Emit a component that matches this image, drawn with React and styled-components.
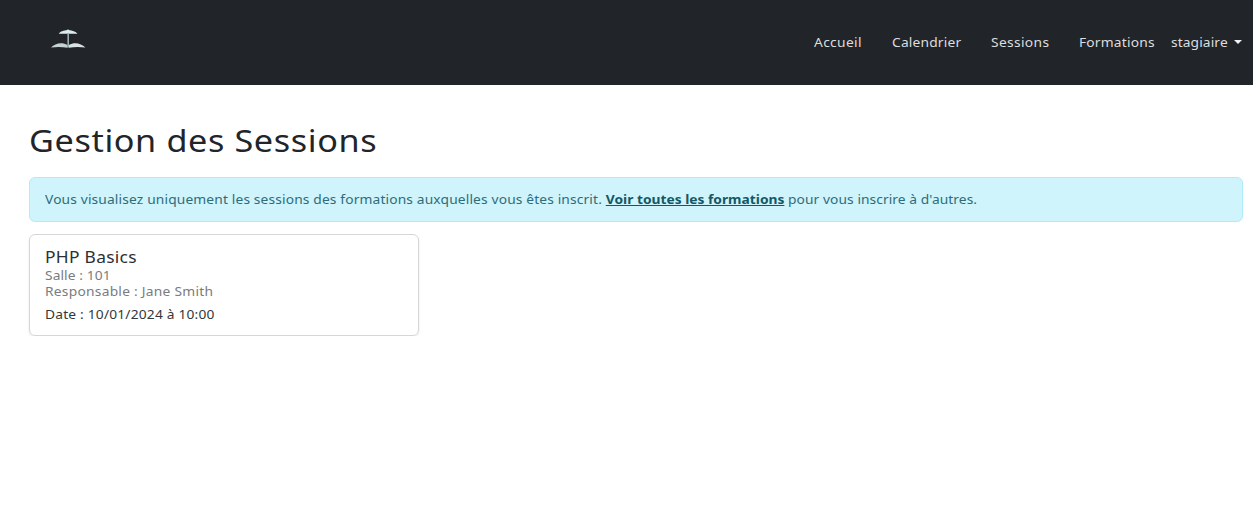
import React from "react";
import styled, { createGlobalStyle } from "styled-components";

const GlobalStyle = createGlobalStyle`
  *, *::before, *::after { box-sizing: border-box; }
  body {
    margin: 0;
    background: #fff;
    color: #212529;
    font-family: "Noto Sans", "Open Sans", sans-serif;
    font-size: 13px;
    line-height: 20px;
  }
  h1, h2, p { margin: 0; font-weight: 400; }
`;

const WideText = styled.span`
  display: inline-block;
  transform: scaleX(${(p) => p.$scale || 1.06});
  transform-origin: left center;
  letter-spacing: ${(p) => p.$spacing || 0}px;
  white-space: nowrap;
`;

const Spaced = styled.span`
  letter-spacing: ${(p) => p.$spacing}px;
`;

const Navbar = styled.header`
  display: flex;
  justify-content: space-between;
  height: 85px;
  padding: 28px 10px 0 50px;
  background: #212529;
`;

const Logo = styled.svg`
  display: block;
  width: 36px;
  height: 22px;
`;

const Nav = styled.nav`
  display: flex;
  padding-top: 4px;
`;

const NavLink = styled.a`
  width: ${(p) => p.$width}px;
  color: #dcddde;
  text-decoration: none;
  white-space: nowrap;
`;

const Caret = styled.span`
  display: inline-block;
  margin-left: 9.5px;
  vertical-align: 3px;
  border-top: 4px solid #f1f2f2;
  border-left: 4px solid transparent;
  border-right: 4px solid transparent;
`;

const Main = styled.main`
  padding: 36px 10px 0 29px;
`;

const Title = styled.h1`
  font-size: 30px;
  line-height: 40px;
`;

const Alert = styled.div`
  height: 45px;
  margin-top: 16px;
  padding: 11px 15px;
  border: 1px solid #b0ecf7;
  border-radius: 6px;
  background: #cff4fc;
  color: #2d6d79;
`;

const AlertLink = styled.a`
  color: #135864;
  font-weight: 700;
  text-decoration: underline;
`;

const Card = styled.article`
  width: 390px;
  height: 102px;
  margin-top: 12px;
  padding: 12px 15px;
  border: 1px solid #d5d6d7;
  border-radius: 6px;
  box-shadow: 0 2px 3px rgba(0, 0, 0, 0.08);
`;

const CardTitle = styled.h2`
  color: #2c3034;
  font-size: 15.5px;
  line-height: 20px;
`;

const CardMeta = styled.p`
  height: 16px;
  color: #797c80;
  line-height: 16px;
`;

const CardDate = styled.p`
  margin-top: 5px;
  color: #33373b;
`;

export default function App() {
  return (
    <>
      <GlobalStyle />
      <Navbar>
        <Logo viewBox="0 0 36 22" aria-label="Logo">
          <path d="M8.8 5.7C10 3.4 14 2.4 17.3 2L18 1l.7 1C22 2.4 26 3.4 27.5 5.7H8.8Z" fill="#dcebed" />
          <path d="M18.2 5v14.5" stroke="#9badb1" strokeWidth="1.6" />
          <path d="M1 19.6C5 15.2 12 13.8 17.5 17v2.8C12 18.8 6 18.8 1 19.6Z" fill="#c5d2d4" />
          <path d="M35.4 19.6C31 15.2 24.5 13.8 18.9 17v2.8C24.5 18.8 30 18.8 35.4 19.6Z" fill="#dae3e3" />
        </Logo>
        <Nav>
          <NavLink href="#" $width={78}><WideText $spacing={0.33}>Accueil</WideText></NavLink>
          <NavLink href="#" $width={99}><WideText $spacing={0.17}>Calendrier</WideText></NavLink>
          <NavLink href="#" $width={88}><WideText $spacing={0.33}>Sessions</WideText></NavLink>
          <NavLink href="#" $width={92}><WideText $spacing={0.18}>Formations</WideText></NavLink>
          <NavLink href="#" $width={72}><WideText $spacing={0.1}>stagiaire</WideText><Caret /></NavLink>
        </Nav>
      </Navbar>
      <Main>
        <Title><WideText $scale={1.14} $spacing={0.54}>Gestion des Sessions</WideText></Title>
        <Alert>
          <WideText>
            <Spaced $spacing={0.135}>
              Vous visualisez uniquement les sessions des formations auxquelles vous êtes inscrit.{" "}
            </Spaced>
            <AlertLink href="#">Voir toutes les formations</AlertLink>
            <Spaced $spacing={0.065}> pour vous inscrire à d'autres.</Spaced>
          </WideText>
        </Alert>
        <Card>
          <CardTitle><WideText $scale={1.12} $spacing={0.27}>PHP Basics</WideText></CardTitle>
          <CardMeta><WideText $spacing={0.08}>Salle : 101</WideText></CardMeta>
          <CardMeta><WideText $spacing={0.24}>Responsable : Jane Smith</WideText></CardMeta>
          <CardDate><WideText $spacing={0.18}>Date : 10/01/2024 à 10:00</WideText></CardDate>
        </Card>
      </Main>
    </>
  );
}
